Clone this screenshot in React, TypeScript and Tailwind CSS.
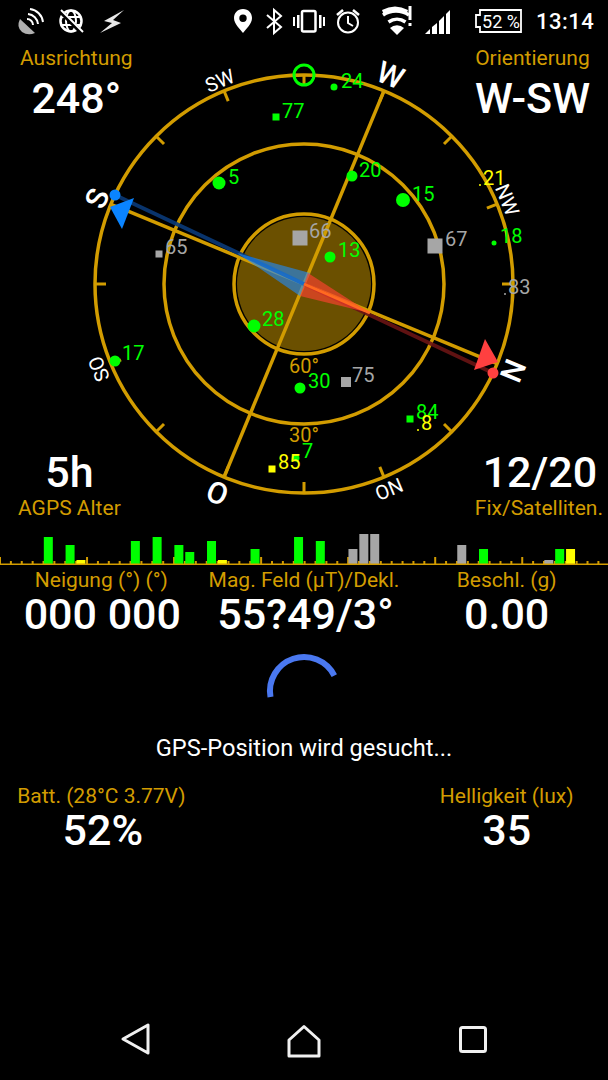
const GOLD = "#d29c00"
const GREEN = "#00ff00"
const GRAY = "#a6a6a6"
const YELLOW = "#ffff00"
const CX = 304
const CY = 284
const R = 209

type Sat = { x: number; y: number; size: number; square?: boolean; label: string; color: string; lx: number; ly: number }

const sats: Sat[] = [
    { x: 334, y: 87, size: 3.5, label: "24", color: GREEN, lx: 341, ly: 88 },
    { x: 276, y: 117, size: 7, square: true, label: "77", color: GREEN, lx: 282, ly: 118 },
    { x: 352, y: 176, size: 5.5, label: "20", color: GREEN, lx: 359, ly: 177 },
    { x: 219, y: 183, size: 6.5, label: "5", color: GREEN, lx: 228, ly: 184 },
    { x: 403, y: 200, size: 7, label: "15", color: GREEN, lx: 412, ly: 201 },
    { x: 480, y: 185, size: 1, label: "21", color: YELLOW, lx: 483, ly: 185 },
    { x: 494, y: 243, size: 2.5, label: "18", color: GREEN, lx: 500, ly: 243 },
    { x: 300, y: 238, size: 15, square: true, label: "66", color: GRAY, lx: 309, ly: 238 },
    { x: 330, y: 257, size: 5.5, label: "13", color: GREEN, lx: 338, ly: 257 },
    { x: 435, y: 246, size: 15, square: true, label: "67", color: GRAY, lx: 445, ly: 246 },
    { x: 159, y: 254, size: 7, square: true, label: "65", color: GRAY, lx: 165, ly: 254 },
    { x: 505, y: 294, size: 1, label: "83", color: GRAY, lx: 508, ly: 294 },
    { x: 254, y: 326, size: 6.5, label: "28", color: GREEN, lx: 262, ly: 326 },
    { x: 115, y: 361, size: 5.5, label: "17", color: GREEN, lx: 122, ly: 360 },
    { x: 300, y: 388, size: 5.5, label: "30", color: GREEN, lx: 308, ly: 388 },
    { x: 346, y: 382, size: 10, square: true, label: "75", color: GRAY, lx: 352, ly: 382 },
    { x: 410, y: 419, size: 7, square: true, label: "84", color: GREEN, lx: 416, ly: 419 },
    { x: 418, y: 430, size: 1, label: "8", color: YELLOW, lx: 421, ly: 430 },
    { x: 296, y: 458, size: 3.5, label: "7", color: GREEN, lx: 302, ly: 458 },
    { x: 272, y: 469, size: 7, square: true, label: "85", color: YELLOW, lx: 278, ly: 469 },
]

const directions = [
    { text: "W", angle: 22.5, size: 30, r: 226 },
    { text: "NW", angle: 67.5, size: 20, r: 220 },
    { text: "N", angle: 112.5, size: 30, r: 226 },
    { text: "NO", angle: 157.5, size: 20, r: 222 },
    { text: "O", angle: 202.5, size: 30, r: 226 },
    { text: "SO", angle: 247.5, size: 20, r: 222 },
    { text: "S", angle: 292.5, size: 30, r: 224 },
    { text: "SW", angle: 337.5, size: 20, r: 220 },
]

const ticks = Array.from({ length: 16 }, (_, i) => i * 22.5)

const bars = [
    { i: 4, top: 537, color: GREEN },
    { i: 6, top: 545, color: GREEN },
    { i: 7, top: 560, color: YELLOW },
    { i: 12, top: 541, color: GREEN },
    { i: 14, top: 537, color: GREEN },
    { i: 16, top: 545, color: GREEN },
    { i: 17, top: 552, color: GREEN },
    { i: 19, top: 541, color: GREEN },
    { i: 20, top: 560, color: YELLOW },
    { i: 23, top: 549, color: GREEN },
    { i: 27, top: 537, color: GREEN },
    { i: 29, top: 541, color: GREEN },
    { i: 32, top: 549, color: GRAY },
    { i: 33, top: 534, color: GRAY },
    { i: 34, top: 534, color: GRAY },
    { i: 42, top: 545, color: GRAY },
    { i: 44, top: 549, color: GREEN },
    { i: 50, top: 560, color: GRAY },
    { i: 51, top: 549, color: GREEN },
    { i: 52, top: 549, color: YELLOW },
]

function polar(angle: number, r: number) {
    const a = (angle * Math.PI) / 180
    return { x: CX + Math.sin(a) * r, y: CY - Math.cos(a) * r }
}

function Compass() {
    const w = polar(22.5, R)
    const o = polar(202.5, R)
    const n = polar(112.5, R - 12)
    const s = polar(292.5, R - 12)

    return (
        <svg viewBox="0 48 608 477" className="col-start-1 row-start-1 w-[608px] h-[477px]" fontFamily="Roboto, sans-serif">
            <circle cx={CX} cy={CY} r={67} fill="#6b5000" />
            <g fill="none" stroke={GOLD} strokeWidth={3.5}>
                <circle cx={CX} cy={CY} r={R} />
                <circle cx={CX} cy={CY} r={140} />
                <circle cx={CX} cy={CY} r={70} />
                <line x1={w.x} y1={w.y} x2={o.x} y2={o.y} />
                <line x1={s.x} y1={s.y} x2={n.x} y2={n.y} />
                {ticks.map((t) => {
                    const a = polar(t, R)
                    const b = polar(t, R - 11)
                    return <line key={t} x1={a.x} y1={a.y} x2={b.x} y2={b.y} strokeWidth={3} />
                })}
            </g>

            <line x1={115} y1={195} x2={304} y2={284} stroke="#0a3a78" strokeWidth={4} opacity={0.9} />
            <line x1={493} y1={373} x2={304} y2={284} stroke="#6a1414" strokeWidth={4} opacity={0.9} />
            <polygon points="237,253 310,273 300,296" fill="#1e8cff" opacity={0.6} />
            <polygon points="370,313 308,273 300,296" fill="#ff4030" opacity={0.65} />
            <line x1={304} y1={284} x2={370} y2={313} stroke="#ff6a20" strokeWidth={3} />
            <polygon points="110,207 134,198 122,229" fill="#0a84ff" />
            <polygon points="474,370 485,339 498,362" fill="#ff4040" />
            <circle cx={115} cy={195} r={5.5} fill="#0a84ff" />
            <circle cx={493} cy={373} r={5.5} fill="#ff4040" />

            <circle cx={304} cy={75} r={10} fill="none" stroke={GREEN} strokeWidth={3} />

            {directions.map((d) => {
                const p = polar(d.angle, d.r)
                return (
                    <text
                        key={d.text}
                        transform={`translate(${p.x} ${p.y}) rotate(${d.angle})`}
                        textAnchor="middle"
                        dominantBaseline="central"
                        fontSize={d.size}
                        fontWeight={d.size > 20 ? 500 : 400}
                        fill="#ffffff"
                    >
                        {d.text}
                    </text>
                )
            })}

            <text x={304} y={373} textAnchor="middle" fontSize={20} fill={GOLD}>60°</text>
            <text x={304} y={442} textAnchor="middle" fontSize={20} fill={GOLD}>30°</text>

            {sats.map((sat) => (
                <g key={sat.label} fill={sat.color}>
                    {sat.square ? (
                        <rect x={sat.x - sat.size / 2} y={sat.y - sat.size / 2} width={sat.size} height={sat.size} />
                    ) : (
                        <circle cx={sat.x} cy={sat.y} r={sat.size} />
                    )}
                    <text x={sat.lx} y={sat.ly} fontSize={20}>{sat.label}</text>
                </g>
            ))}
        </svg>
    )
}

function SignalGraph() {
    const pitch = 10.88
    return (
        <svg viewBox="0 525 608 50" className="w-[608px] h-[50px]">
            {Array.from({ length: 56 }, (_, k) => (
                <rect key={k} x={k * pitch - 1} y={k % 8 === 0 ? 557 : 561} width={2} height={k % 8 === 0 ? 7 : 3} fill={GOLD} />
            ))}
            {bars.map((b) => (
                <rect key={b.i} x={b.i * pitch + 0.3} y={b.top} width={9} height={564 - b.top} fill={b.color} />
            ))}
            <rect x={0} y={563.5} width={608} height={1.5} fill={GOLD} />
        </svg>
    )
}

function StatusLeft() {
    return (
        <svg viewBox="0 0 130 48" className="w-[130px] h-[48px]">
            <path d="M20 19 L35 33 Q28 36 22 32 Q16 27 20 19Z" fill="#b0b0b0" />
            <g fill="none" stroke="#ffffff" strokeWidth={2}>
                <path d="M27 19 A6 6 0 0 1 33 25" />
                <path d="M28 14 A11 11 0 0 1 38 24" />
                <path d="M30 9 A15 15 0 0 1 43 22" />
            </g>
            <g fill="none" stroke="#ffffff" strokeWidth={2.5}>
                <circle cx={71} cy={21} r={10.5} />
                <ellipse cx={71} cy={21} rx={5} ry={10.5} strokeWidth={2} />
                <line x1={61} y1={17} x2={81} y2={17} strokeWidth={2} />
                <line x1={61} y1={25} x2={81} y2={25} strokeWidth={2} />
            </g>
            <line x1={60} y1={11} x2={82} y2={33} stroke="#000000" strokeWidth={4.5} />
            <line x1={61} y1={10} x2={83} y2={32} stroke="#ffffff" strokeWidth={2} />
            <path d="M124 10 L104 21 L112 23 L100 33 L121 23 L113 20 Z" fill="#e8e8e8" />
        </svg>
    )
}

function StatusRight() {
    return (
        <svg viewBox="230 0 296 48" className="w-[296px] h-[48px]" fontFamily="Roboto, sans-serif">
            <path fillRule="evenodd" d="M243 9 C248.5 9 252 13.2 252 18 C252 24 246 29 243 33 C240 29 234 24 234 18 C234 13.2 237.5 9 243 9Z M243 14.5 A3.7 3.7 0 1 0 243 21.9 A3.7 3.7 0 1 0 243 14.5Z" fill="#ffffff" />
            <path d="M267 15 L281 27 L274 33 V10 L281 16 L267 28" fill="none" stroke="#ffffff" strokeWidth={2} />
            <g fill="#ffffff">
                <rect x={293} y={17} width={2} height={9} />
                <rect x={297} y={15} width={2.5} height={13} />
                <rect x={319} y={15} width={2.5} height={13} />
                <rect x={323} y={17} width={2} height={9} />
            </g>
            <rect x={302} y={11} width={13.5} height={20.5} rx={1.5} fill="none" stroke="#ffffff" strokeWidth={2.5} />
            <g fill="none" stroke="#ffffff" strokeWidth={2}>
                <circle cx={348} cy={22.5} r={10} />
                <path d="M348 16 V23 L353 26" />
                <path d="M337 15 L343 10" strokeWidth={2.5} />
                <path d="M353 10 L359 15" strokeWidth={2.5} />
            </g>
            <g fill="none" stroke="#ffffff" strokeWidth={3.5}>
                <path d="M388.5 22 A15 15 0 0 1 405.5 22" />
                <path d="M384 15.5 A23 23 0 0 1 410 15.5" transform="translate(-1 -0.5)" />
            </g>
            <path d="M382 11 A27 27 0 0 1 408 11 L406.5 15 A23 23 0 0 0 383.5 15Z" fill="#ffffff" transform="translate(0 -1)" />
            <path d="M390 28 A10 10 0 0 1 404 28 L397 35Z" fill="#ffffff" />
            <rect x={408.5} y={6} width={3} height={14} fill="#ffffff" />
            <rect x={408.5} y={23} width={3} height={3} fill="#ffffff" />
            <g fill="#ffffff">
                <polygon points="425,34 430,34 430,29" />
                <polygon points="432,34 437,34 437,23 432,27" />
                <polygon points="439,34 444,34 444,16 439,21" />
                <polygon points="446,34 450,34 450,10 446,14" />
            </g>
            <path d="M480 10 H521 V32 H480 V27 H476 V15 H480 Z" fill="none" stroke="#ffffff" strokeWidth={1.8} />
            <text x={501} y={28} textAnchor="middle" fontSize={18} fill="#ffffff">52 %</text>
        </svg>
    )
}

function NavBar() {
    return (
        <svg viewBox="100 1010 400 60" className="w-[400px] h-[60px] ml-[100px] mt-auto mb-[10px]" fill="none" stroke="#f0f0f0" strokeWidth={3} strokeLinejoin="round">
            <polygon points="123,1039 148,1025 148,1053" />
            <polygon points="304,1026.5 319,1040 319,1056 289,1056 289,1040" />
            <rect x={460.5} y={1027.5} width={25} height={24} rx={2} />
        </svg>
    )
}

export default function App() {
    return (
        <div className="flex flex-col w-[608px] h-[1080px] bg-black text-white font-['Roboto',sans-serif]">
            <div className="flex h-[48px] shrink-0">
                <StatusLeft />
                <div className="w-[100px]" />
                <StatusRight />
                <span className="ml-[10px] text-[22px] leading-[44px] font-medium tracking-[0.5px]">13:14</span>
            </div>

            <div className="grid h-[477px] shrink-0">
                <Compass />
                <div className="col-start-1 row-start-1 z-10 flex flex-col justify-between -mt-[2px] pb-[5px]">
                    <div className="flex justify-between pl-[20px] pr-[18px]">
                        <div className="flex flex-col items-center">
                            <span className="text-[21px] leading-[24px] text-[#d29c00]">Ausrichtung</span>
                            <span className="text-[43px] leading-[52px] mt-[2px] font-medium">248°</span>
                        </div>
                        <div className="flex flex-col items-center">
                            <span className="text-[21px] leading-[24px] text-[#d29c00]">Orientierung</span>
                            <span className="text-[43px] leading-[52px] mt-[2px] font-medium">W-SW</span>
                        </div>
                    </div>
                    <div className="flex justify-between pl-[18px] pr-[5px]">
                        <div className="flex flex-col items-center">
                            <span className="text-[43px] leading-[52px] -mb-[2px] font-medium">5h</span>
                            <span className="text-[21px] leading-[24px] text-[#d29c00]">AGPS Alter</span>
                        </div>
                        <div className="flex flex-col items-center">
                            <span className="text-[43px] leading-[52px] -mb-[2px] pl-[2px] font-medium">12/20</span>
                            <span className="text-[21px] leading-[24px] text-[#d29c00]">Fix/Satelliten.</span>
                        </div>
                    </div>
                </div>
            </div>

            <SignalGraph />

            <div className="grid grid-cols-3 text-center -mt-[7px]">
                <div className="flex flex-col">
                    <span className="text-[21px] leading-[24px] text-[#d29c00]">Neigung (°) (°)</span>
                    <span className="text-[43px] leading-[44px] pl-[2px] font-medium">000 000</span>
                </div>
                <div className="flex flex-col">
                    <span className="text-[21px] leading-[24px] text-[#d29c00] whitespace-nowrap">Mag. Feld (µT)/Dekl.</span>
                    <span className="text-[43px] leading-[44px] pl-[3px] font-medium">55?49/3°</span>
                </div>
                <div className="flex flex-col">
                    <span className="text-[21px] leading-[24px] text-[#d29c00]">Beschl. (g)</span>
                    <span className="text-[43px] leading-[44px] font-medium">0.00</span>
                </div>
            </div>

            <svg viewBox="262 650 84 56" className="w-[84px] h-[56px] ml-[262px] mt-[14px]" fill="none">
                <path d="M270.5 696.9 A34 34 0 0 1 334.3 675.6" stroke="#4a78f0" strokeWidth={6} />
            </svg>

            <p className="text-center text-[23.6px] leading-[28px] mt-[28px]">GPS-Position wird gesucht...</p>

            <div className="grid grid-cols-3 text-center mt-[22px]">
                <div className="flex flex-col">
                    <span className="text-[21px] leading-[24px] text-[#d29c00] whitespace-nowrap">Batt. (28°C 3.77V)</span>
                    <span className="text-[43px] leading-[44px] pl-[3px] font-medium">52%</span>
                </div>
                <div />
                <div className="flex flex-col">
                    <span className="text-[21px] leading-[24px] text-[#d29c00]">Helligkeit (lux)</span>
                    <span className="text-[43px] leading-[44px] font-medium">35</span>
                </div>
            </div>

            <NavBar />
        </div>
    )
}
